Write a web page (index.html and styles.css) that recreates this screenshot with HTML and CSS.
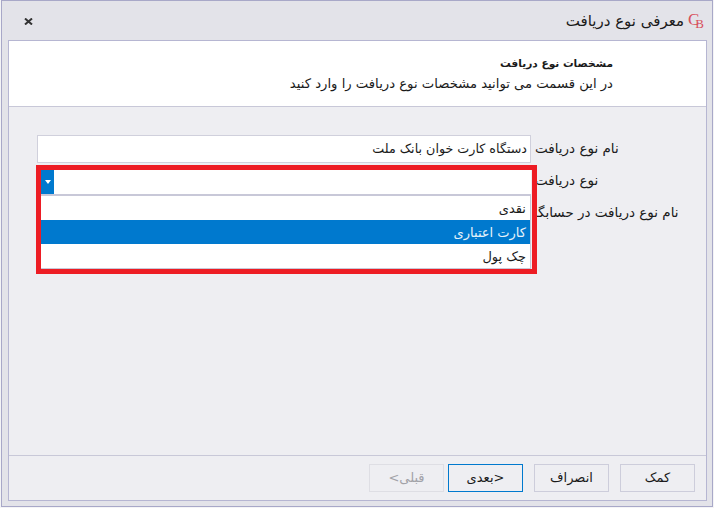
FILE: index.html
```html
<!doctype html>
<html dir="rtl" lang="fa">

<head>
<meta charset="utf-8">
<title>معرفی نوع دریافت</title>
<link rel="stylesheet" href="styles.css">
</head>

<body>
    <div class="window">

        <div class="titlebar">
            <div class="logo"><span class="logo-c">C</span><span class="logo-b">B</span></div>
            <div class="title">معرفی نوع دریافت</div>
            <svg class="close" width="9" height="7" viewBox="0 0 9 7">
                <path d="M1 0.5 L8 6.5 M8 0.5 L1 6.5" stroke="#333" stroke-width="2" fill="none"/>
            </svg>
        </div>

        <div class="panel">
            <div class="header">
                <p class="header-title">مشخصات نوع دریافت</p>
                <p class="header-sub">در این قسمت می توانید مشخصات نوع دریافت را وارد کنید</p>
            </div>

            <div class="form">
                <div class="row">
                    <div class="field">دستگاه کارت خوان بانک ملت</div>
                    <div class="label">نام نوع دریافت</div>
                </div>
                <div class="row">
                    <div class="field"></div>
                    <div class="label">نوع دریافت</div>
                </div>
                <div class="row">
                    <div class="field short"></div>
                    <div class="label">نام نوع دریافت در حسابگری</div>
                </div>

                <!-- red callout drawn over the open combo -->
                <div class="callout">
                    <div class="combo">
                        <div class="combo-text"></div>
                        <div class="combo-btn"><span class="arrow"></span></div>
                    </div>
                    <div class="list">
                        <div class="item">نقدی</div>
                        <div class="item selected">کارت اعتباری</div>
                        <div class="item">چک پول</div>
                    </div>
                </div>
            </div>

            <div class="footer">
                <div class="btn">کمک</div>
                <div class="btn">انصراف</div>
                <div class="btn default">&lt;بعدی</div>
                <div class="btn disabled">قبلی&gt;</div>
            </div>
        </div>

    </div>
</body>

</html>
```

FILE: styles.css
```css
*{
    margin : 0;
    padding : 0;
    box-sizing : border-box;
}
body{
    background : #f4f4f6;
    font-family : "DejaVu Sans", "Noto Sans", sans-serif;
    font-size : 13px;
    color : #1a1a1a;
}

.window{
    width : 712px;
    height : 507px;
    margin-right : 1px;
    border : 1px solid #a8a8c8;
    background : #e3e3e9;
    display : flex;
    flex-direction : column;
}

.titlebar{
    height : 39px;
    display : flex;
    align-items : center;
    padding : 0 8px 0 22px;
}
.title{
    font-size : 15px;
    margin-right : 4px;
    flex : 1;
}
.close{
    margin-top : 1px;
}

.logo{
    direction : ltr;
    display : flex;
    width : 16px;
    height : 16px;
    font-family : "Liberation Serif", serif;
    color : #d8505c;
}
.logo-c{
    font-size : 17px;
    line-height : 13px;
}
.logo-b{
    font-size : 13px;
    line-height : 11px;
    margin-left : -4px;
    align-self : flex-end;
}

.panel{
    flex : 1;
    margin : 0 5px 5px 6px;
    border : 1px solid #b6b6d2;
    background : #eeeef2;
    display : flex;
    flex-direction : column;
}

.header{
    height : 66px;
    padding : 14px 93px 0 0;
    background : white;
    border-bottom : 1px solid #c8c8d8;
}
.header-title{
    font-weight : bold;
    font-size : 10.6px;
    line-height : 16px;
}
.header-sub{
    margin-top : 5px;
    line-height : 16px;
    font-size : 13.2px;
}

.form{
    position : relative;
    flex : 1;
    padding : 28px 0 0 28px;
    display : flex;
    flex-direction : column;
    gap : 4px;
}
.row{
    display : flex;
    flex-direction : row-reverse;
    justify-content : flex-start;
    align-items : center;
    gap : 4px;
    height : 28px;
}
.field{
    width : 494px;
    height : 28px;
    line-height : 26px;
    padding-right : 3px;
    font-size : 12.7px;
    background : white;
    border : 1px solid #d0d0dc;
}
.field.short{
    width : 479px;
}
.label{
    white-space : nowrap;
    font-size : 13.5px;
    padding-bottom : 3px;
}

.callout{
    position : absolute;
    left : 27px;
    top : 58px;
    width : 501px;
    height : 109px;
    border : 5px solid #ed1c24;
    background : #eeeef2;
}
.combo{
    display : flex;
    height : 26px;
    width : 490px;
    margin-right : 1px;
    background : white;
    border-bottom : 2px solid #c8c8d8;
}
.combo-text{
    flex : 1;
}
.combo-btn{
    width : 13px;
    background : #0079ce;
    display : flex;
    justify-content : center;
    align-items : center;
}
.arrow{
    width : 0;
    height : 0;
    border-left : 3.5px solid transparent;
    border-right : 3.5px solid transparent;
    border-top : 4px solid white;
}
.list{
    width : 490px;
    margin-right : 1px;
    background : white;
    border-right : 1px solid #c8c8d8;
    border-bottom : 1px solid #c8c8d8;
}
.item{
    height : 24px;
    line-height : 26px;
    padding-right : 4px;
}
.item.selected{
    background : #0079ce;
    color : #e6f2fa;
}

.footer{
    height : 45px;
    border-top : 1px solid #c8c8d8;
    padding : 8px 11px 0 0;
    display : flex;
    gap : 11px;
}
.btn{
    width : 75px;
    height : 28px;
    line-height : 26px;
    text-align : center;
    border : 1px solid #cdcddb;
}
.btn.default{
    border-color : #0079ce;
}
.btn.disabled{
    margin-right : -7px;
    color : #a2a2a8;
    border-color : #dedee4;
}
```
